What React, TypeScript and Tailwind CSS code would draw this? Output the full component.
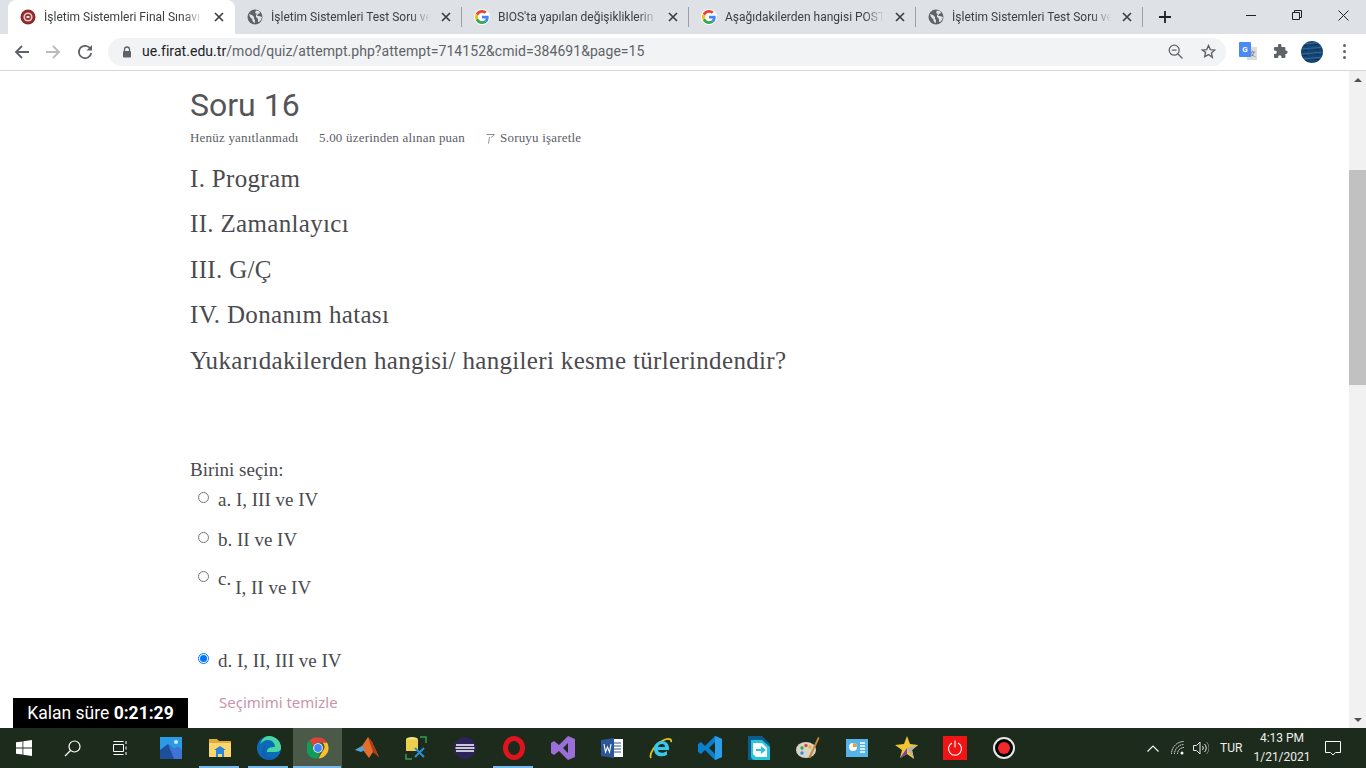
import { ReactNode } from "react";

const tabFont = "font-['Roboto',sans-serif]";
const serif = "font-['Liberation_Serif',serif]";

function Globe() {
  return (
    <svg width="16" height="16" viewBox="0 0 16 16" className="shrink-0">
      <circle cx="8" cy="8" r="7.5" fill="#5f6368" />
      <path d="M2 5l3 1 2 2 0 2 1 1 0 3-2-1-1-3-2-2zM9 1.500l3 .5 1 2-2 1-1 2 2 0 3 1-1 3-2 2-1 0 0-3-2-2 0-2 1-1-2-1z" fill="#dee1e6" />
    </svg>
  );
}

function GoogleG() {
  return (
    <div className="w-4 h-4 rounded-full bg-white shrink-0 flex items-center justify-center">
      <svg width="14" height="14" viewBox="0 0 48 48">
        <path fill="#EA4335" d="M24 9.500c3.500 0 6.700 1.200 9.200 3.600l6.900-6.900C35.900 2.400 30.500 0 24 0 14.600 0 6.500 5.400 2.600 13.200l8 6.200C12.500 13.700 17.800 9.500 24 9.500z" />
        <path fill="#4285F4" d="M47 24.500c0-1.600-.1-3.100-.4-4.500H24v9h13c-.6 3-2.300 5.500-4.800 7.200l7.700 6C44.400 38.100 47 31.900 47 24.500z" />
        <path fill="#FBBC05" d="M10.500 28.600c-.5-1.400-.8-3-.8-4.600s.3-3.200.8-4.600l-8-6.200C.9 16.400 0 20.100 0 24s.9 7.600 2.600 10.800z" />
        <path fill="#34A853" d="M24 48c6.500 0 11.900-2.100 15.900-5.800l-7.700-6c-2.100 1.400-4.900 2.300-8.200 2.300-6.200 0-11.500-4.200-13.400-9.900l-8 6.200C6.500 42.600 14.600 48 24 48z" />
      </svg>
    </div>
  );
}

function FiratIcon() {
  return (
    <svg width="16" height="16" viewBox="0 0 16 16" className="shrink-0">
      <circle cx="8" cy="8" r="7.500" fill="#8f2a2a" />
      <circle cx="8" cy="8" r="4.600" fill="#e7c9c6" />
      <circle cx="8" cy="8" r="3" fill="#9c2b2e" />
      <rect x="6.500" y="7" width="3" height="2" fill="#f3e3e0" />
    </svg>
  );
}

function CloseX() {
  return (
    <svg width="10" height="10" viewBox="0 0 10 10" className="shrink-0">
      <path d="M1 1l8 8M9 1l-8 8" stroke="#3c4043" strokeWidth="1.700" />
    </svg>
  );
}

function Tab({ icon, title, active, sep }: { icon: ReactNode; title: string; active?: boolean; sep?: boolean }) {
  return (
    <div className={`relative w-[227px] h-[34px] flex items-center pl-3 pr-[11px] gap-2 ${active ? "bg-white rounded-t-lg" : ""}`}>
      {icon}
      <span className={`flex-1 mr-[3px] overflow-hidden whitespace-nowrap text-[12px] text-[#3c4043] [mask-image:linear-gradient(to_right,black_88%,transparent_100%)] ${tabFont}`}>
        {title}
      </span>
      <CloseX />
      {sep && <div className="absolute right-0 top-[7px] w-px h-5 bg-[#9aa0a6]" />}
    </div>
  );
}

function TabStrip() {
  return (
    <div className="h-[34px] bg-[#dee1e6] flex items-end shrink-0 relative">
      <div className="flex pl-2">
        <Tab active icon={<FiratIcon />} title="İşletim Sistemleri Final Sınavı (sayfa 16)" />
        <Tab sep icon={<Globe />} title="İşletim Sistemleri Test Soru ve Cevapları" />
        <Tab sep icon={<GoogleG />} title="BIOS'ta yapılan değişikliklerin kaydedilmesi" />
        <Tab sep icon={<GoogleG />} title="Aşağıdakilerden hangisi POST esnasında" />
        <Tab sep icon={<Globe />} title="İşletim Sistemleri Test Soru ve Cevapları" />
      </div>
      <div className="ml-4 h-[34px] flex items-center">
        <svg width="12" height="12" viewBox="0 0 12 12">
          <path d="M6 0v12M0 6h12" stroke="#202124" strokeWidth="1.800" />
        </svg>
      </div>
      <div className="ml-auto flex h-[34px] items-start">
        <div className="w-[46px] h-[30px] flex items-center justify-center">
          <div className="w-[10px] h-px bg-[#202124]" />
        </div>
        <div className="w-[46px] h-[30px] flex items-center justify-center">
          <svg width="10" height="10" viewBox="0 0 10 10" fill="none" stroke="#202124">
            <path d="M.5 2.500h7v7h-7zM2.500 2.500v-2h7v7h-2" />
          </svg>
        </div>
        <div className="w-[46px] h-[30px] flex items-center justify-center">
          <svg width="11" height="11" viewBox="0 0 11 11" stroke="#202124">
            <path d="M.5.500l10 10M10.500.500l-10 10" />
          </svg>
        </div>
      </div>
    </div>
  );
}

function Toolbar() {
  return (
    <div className="h-[37px] bg-white border-b border-[#d6d7d9] flex items-center shrink-0 pb-[1px]">
      <div className="w-[44px] flex justify-center">
        <svg width="16" height="16" viewBox="0 0 16 16" fill="none" stroke="#5f6368" strokeWidth="1.800">
          <path d="M15 8H2M8 2L2 8l6 6" />
        </svg>
      </div>
      <div className="w-[18px] flex justify-center">
        <svg width="16" height="16" viewBox="0 0 16 16" fill="none" stroke="#b8babd" strokeWidth="1.800">
          <path d="M1 8h13M8 2l6 6-6 6" />
        </svg>
      </div>
      <div className="w-[46px] flex justify-center">
        <svg width="16" height="16" viewBox="0 0 16 16" fill="none" stroke="#5f6368" strokeWidth="1.800">
          <path d="M13.500 5A6.200 6.200 0 1 0 14.200 9" />
          <path d="M15 1v5.500H9.500z" fill="#5f6368" stroke="none" />
        </svg>
      </div>
      <div className="w-[1118px] h-7 rounded-full bg-[#f1f3f4] flex items-center pl-[14px] pr-[10px]">
        <svg width="10" height="12" viewBox="0 0 10 12" className="shrink-0">
          <path d="M2.500 5V3.500a2.500 2.500 0 0 1 5 0V5" fill="none" stroke="#5f6368" strokeWidth="1.300" />
          <rect x="1" y="5" width="8" height="6.500" rx="1" fill="#5f6368" />
        </svg>
        <span className="ml-[10px] text-[14px] text-[#5f6368] font-['Roboto',sans-serif] tracking-[0.05px]">
          <span className="text-[#202124]">ue.firat.edu.tr</span>/mod/quiz/attempt.php?attempt=714152&amp;cmid=384691&amp;page=15
        </span>
        <div className="ml-auto flex items-center gap-[18px]">
          <svg width="15" height="15" viewBox="0 0 15 15" fill="none" stroke="#5f6368" strokeWidth="1.300">
            <circle cx="6.200" cy="6.200" r="5" />
            <path d="M10 10l4.500 4.500M3.800 6.200h4.800" />
          </svg>
          <svg width="15" height="15" viewBox="0 0 24 24" fill="none" stroke="#5f6368" strokeWidth="2.200">
            <path d="M12 2.500l2.900 6.400 7 .8-5.200 4.700 1.400 6.900L12 16.900l-6.100 3.400 1.400-6.900L2.100 9.700l7-.8z" />
          </svg>
        </div>
      </div>
      <div className="ml-[13px] w-[18px] h-[19px] relative shrink-0">
        <div className="absolute left-[8px] top-[5px] w-[10px] h-[13px] bg-[#dcdcdc] text-[#666] text-[7px] leading-[13px] text-center">文</div>
        <div className="absolute left-0 top-0 w-[12px] h-[15px] bg-[#4a8af4] text-white text-[8px] font-bold flex items-center justify-center rounded-[1px] font-['Roboto',sans-serif]">G</div>
      </div>
      <div className="ml-4 shrink-0">
        <svg width="15" height="15" viewBox="0 0 15 15" fill="#5f6368">
          <path d="M5 1.500a1.700 1.700 0 0 1 3.400 0V3h3a1 1 0 0 1 1 1v2.500h.4a1.800 1.800 0 0 1 0 3.600h-.4V13a1 1 0 0 1-1 1H8.500v-1a1.700 1.700 0 0 0-3.400 0v1H2a1 1 0 0 1-1-1v-2.900h1a1.800 1.800 0 0 0 0-3.600H1V4a1 1 0 0 1 1-1h3z" />
        </svg>
      </div>
      <div className="ml-[13px] w-[22px] h-[22px] rounded-full shrink-0 bg-[repeating-linear-gradient(175deg,#16436f_0px,#16436f_2px,#2a6aa3_3px,#0d2b4d_5px)]" />
      <div className="ml-5 flex flex-col gap-[3px] shrink-0">
        <div className="w-[3px] h-[3px] rounded-full bg-[#5f6368]" />
        <div className="w-[3px] h-[3px] rounded-full bg-[#5f6368]" />
        <div className="w-[3px] h-[3px] rounded-full bg-[#5f6368]" />
      </div>
    </div>
  );
}

function Radio({ checked }: { checked?: boolean }) {
  return (
    <div className={`w-[11px] h-[11px] mt-[2px] rounded-full border bg-white shrink-0 flex items-center justify-center ${checked ? "border-[#0075ff]" : "border-[#767676]"}`}>
      {checked && <div className="w-[7px] h-[7px] rounded-full bg-[#0075ff]" />}
    </div>
  );
}

function Answer({ label, text, checked, className }: { label: string; text: string; checked?: boolean; className?: string }) {
  return (
    <div className={`flex items-start gap-[9px] ml-2 text-[19px] leading-[24px] text-[#4a4a4f] ${className ?? ""}`}>
      <Radio checked={checked} />
      <span className="-mt-[2px]">{label} {text}</span>
    </div>
  );
}

function Scrollbar() {
  return (
    <div className="w-[17px] bg-[#f1f1f1] flex flex-col items-center shrink-0">
      <div className="h-[17px] flex items-center justify-center">
        <div className="w-0 h-0 border-x-[4px] border-x-transparent border-b-[4px] border-b-[#505050]" />
      </div>
      <div className="h-[82px]" />
      <div className="w-full h-[215px] bg-[#c1c1c1]" />
      <div className="flex-1" />
      <div className="h-[17px] flex items-center justify-center">
        <div className="w-0 h-0 border-x-[4px] border-x-transparent border-t-[4px] border-t-[#505050]" />
      </div>
    </div>
  );
}

function QuizPage() {
  const lines = ["I. Program", "II. Zamanlayıcı", "III. G/Ç", "IV. Donanım hatası", "Yukarıdakilerden hangisi/ hangileri kesme türlerindendir?"];
  return (
    <div className="flex-1 min-h-0 flex relative bg-white">
      <div className={`flex-1 pl-[190px] pt-[14px] overflow-hidden ${serif}`}>
        <h2 className="font-['Roboto',sans-serif] text-[32px] leading-[40px] text-[#555559]">Soru 16</h2>
        <div className="flex items-center mt-1 text-[13px] leading-[18px] tracking-[0.2px] text-[#5c6068]">
          <span className="w-[129px]">Henüz yanıtlanmadı</span>
          <span className="w-[167px]">5.00 üzerinden alınan puan</span>
          <svg width="9" height="10" viewBox="0 0 9 10" className="mr-[5px] mt-[2px]" fill="none" stroke="#777">
            <path d="M.500.500h8L5 3.500M3.500 3l-1 6.500" strokeWidth="0.800" />
          </svg>
          <span>Soruyu işaretle</span>
        </div>
        <div className="mt-[15.500px] flex flex-col gap-[14px] text-[25px] leading-[31.500px] tracking-[0.33px] text-[#4a4a4f]">
          {lines.map((l) => (
            <p key={l}>{l}</p>
          ))}
        </div>
        <p className="mt-[81.500px] text-[19px] leading-[24px] text-[#4a4a4f]">Birini seçin:</p>
        <div className="mt-2 flex flex-col">
          <Answer label="a." text="I, III ve IV" />
          <Answer label="b." text="II ve IV" className="mt-[18px]" />
          <div className="flex items-start gap-[9px] ml-2 mt-[17px] text-[19px] leading-[24px] text-[#4a4a4f] h-[67px]">
            <Radio />
            <span className="-mt-[2px]">c.</span>
            <span className="-ml-[5px] mt-[7px]">I, II ve IV</span>
          </div>
          <Answer label="d." text="I, II, III ve IV" checked className="mt-[15px]" />
          <span className="ml-[29px] mt-[19px] text-[15px] leading-[20px] text-[#c994ac] font-['Noto_Sans',sans-serif]">Seçimimi temizle</span>
        </div>
      </div>
      <Scrollbar />
      <div className="absolute left-[13px] bottom-0 w-[175px] h-[30px] bg-black text-white flex items-center justify-center font-['Roboto',sans-serif] text-[17.500px]">
        Kalan süre&nbsp;<b>0:21:29</b>
      </div>
    </div>
  );
}

function AppIcon({ children, active, open }: { children: ReactNode; active?: boolean; open?: boolean }) {
  return (
    <div className={`relative w-[49px] h-10 flex items-center justify-center shrink-0 ${active ? "bg-[#4b5a48]" : ""}`}>
      {children}
      {active && <div className="absolute left-0 right-px bottom-0 h-[2px] bg-[#76b9ed]" />}
      {open && <div className="absolute left-1 right-[5px] bottom-0 h-[2px] bg-[#76b9ed]" />}
    </div>
  );
}

function Taskbar() {
  return (
    <div className="h-10 bg-[#1d2b1c] flex items-center shrink-0 text-white">
      <div className="w-12 flex justify-center">
        <svg width="16" height="16" viewBox="0 0 16 16" fill="#fff">
          <path d="M0 2.300l6.500-.9v6.200H0zM7.300 1.300L16 0v7.600H7.300zM0 8.400h6.500v6.200L0 13.700zM7.300 8.400H16V16l-8.700-1.200z" />
        </svg>
      </div>
      <div className="w-12 flex justify-center">
        <svg width="17" height="17" viewBox="0 0 17 17" fill="none" stroke="#fff" strokeWidth="1.200">
          <circle cx="10.500" cy="6.500" r="5.500" />
          <path d="M6.500 10.500L1 16" />
        </svg>
      </div>
      <div className="w-[50px] flex justify-center">
        <svg width="16" height="16" viewBox="0 0 16 16" fill="none" stroke="#fff">
          <path d="M.5 4.500h10v7H.5zM.5 1.500h10M.5 14.500h10M13 1v3M13 6.500v3M13 12v3" />
        </svg>
      </div>

      <AppIcon>
        <svg width="22" height="22" viewBox="0 0 22 22">
          <rect width="22" height="22" fill="#2b9be8" />
          <path d="M0 22V13l8-6 6 5 4-2 4 4v8z" fill="#1c4f9c" />
          <path d="M8 7l6 5 4-2 4 4v8h-8z" fill="#3f74d6" />
          <circle cx="16" cy="5" r="2" fill="#cfeafc" />
        </svg>
      </AppIcon>
      <AppIcon open>
        <svg width="22" height="20" viewBox="0 0 22 20">
          <path d="M0 1h8l2 2h12v16H0z" fill="#e2ab36" />
          <path d="M0 5h22v14H0z" fill="#fbd66f" />
          <path d="M7 12h8v7h-2v-3H9v3H7z" fill="#2b86d9" />
          <path d="M5 12l6-4 6 4z" fill="#2b86d9" />
        </svg>
      </AppIcon>
      <AppIcon open>
        <svg width="24" height="24" viewBox="0 0 24 24">
          <circle cx="12" cy="12" r="12" fill="#0c6bb8" />
          <path d="M12 0a12 12 0 0 1 12 12c0 3-3 4-6 4H10c0-4 3-5 8-5 0-4-3-7-7-7-3 0-6 2-8 4 2-5 5-8 9-8z" fill="#47d6a2" />
          <path d="M8 14c0 5 4 8 9 8l2-1c-2 2-5 3-7 3-4 0-7-4-7-8 0-4 3-7 5-8-1 2-2 4-2 6z" fill="#125fae" />
        </svg>
      </AppIcon>
      <AppIcon active>
        <svg width="22" height="22" viewBox="0 0 48 48">
          <path d="M24 1a23 23 0 0 1 20 11.500H24a11.500 11.500 0 0 0-11 8L5 7.500A23 23 0 0 1 24 1z" fill="#db4437" />
          <path d="M44 12.500A23 23 0 0 1 25 47l10-17.500a11.500 11.500 0 0 0-1-17z" fill="#fbc02d" />
          <path d="M5 7.500l10 17.500a11.500 11.500 0 0 0 14 10.500L23 47A23 23 0 0 1 5 7.500z" fill="#0f9d58" />
          <circle cx="24" cy="24" r="10.500" fill="#fff" />
          <circle cx="24" cy="24" r="8.500" fill="#4285f4" />
        </svg>
      </AppIcon>
      <AppIcon>
        <svg width="24" height="22" viewBox="0 0 24 22">
          <path d="M0 13l7-4 6-9 4 5 7 15-6-5-4 6-6-8z" fill="#e0702a" />
          <path d="M0 13l7-4 3 4-4 2z" fill="#4fa3d8" />
          <path d="M13 0l4 5 7 15-6-5z" fill="#b23a1c" />
        </svg>
      </AppIcon>
      <AppIcon>
        <svg width="22" height="24" viewBox="0 0 22 24">
          <ellipse cx="7" cy="3.500" rx="6" ry="2.500" fill="#f6e27a" />
          <path d="M1 3.500h12V15H1z" fill="#eccf4e" />
          <path d="M15 1h6v6M1 18v5h6" fill="none" stroke="#3a9a4a" strokeWidth="1.500" />
          <path d="M10 12l9 9M19 12l-9 9" stroke="#2b8fd8" strokeWidth="2" />
        </svg>
      </AppIcon>
      <AppIcon>
        <svg width="22" height="22" viewBox="0 0 22 22">
          <circle cx="11" cy="11" r="11" fill="#2c2255" />
          <path d="M0 11a11 11 0 0 1 3-8A12 12 0 0 0 3 19a11 11 0 0 1-3-8z" fill="#f7941e" />
          <path d="M2 8h18M1.500 11h19M2 14h18" stroke="#fff" strokeWidth="1.300" />
        </svg>
      </AppIcon>
      <AppIcon open>
        <div className="w-[22px] h-6 rounded-[50%] border-[5px] border-[#e0141f]" />
      </AppIcon>
      <AppIcon>
        <svg width="24" height="24" viewBox="0 0 24 24">
          <path d="M17 0l7 3v18l-7 3-9-9-5 4-3-2V7l3-2 5 4zM17 7l-5 5 5 5z" fill="#9a6fd8" fillRule="evenodd" />
        </svg>
      </AppIcon>
      <AppIcon>
        <svg width="22" height="20" viewBox="0 0 22 20">
          <rect x="8" y="1" width="14" height="18" fill="#fff" />
          <path d="M13 5h7M13 8h7M13 11h7M13 14h7" stroke="#2b579a" />
          <path d="M0 2l13-2v20L0 18z" fill="#2b579a" />
          <path d="M3 6l1.500 8 2-5 2 5L10 6" stroke="#fff" fill="none" strokeWidth="1.100" />
        </svg>
      </AppIcon>
      <AppIcon>
        <svg width="24" height="24" viewBox="0 0 24 24" fill="none">
          <path d="M2 22c-2-3 3-14 13-18 5-2 8-1 7 2" stroke="#e8c21e" strokeWidth="1.800" />
          <path d="M5 13c0-5 4-8 8-8s7 3 7 7v2H9c0 3 5 4 9 1v4c-6 3-13 1-13-6zm4-2h7c0-2-1-3-3-3s-4 1-4 3z" fill="#37c8ee" />
        </svg>
      </AppIcon>
      <AppIcon>
        <svg width="24" height="24" viewBox="0 0 24 24">
          <path d="M17 0l7 3v18l-7 3L7 14l-4 4-3-2V8l3-2 4 4z" fill="#0a7fd0" />
          <path d="M17 6l-6 6 6 6z" fill="#1d2b1c" />
          <path d="M17 0l7 3v18l-7 3z" fill="#2a9fe8" />
        </svg>
      </AppIcon>
      <AppIcon>
        <svg width="22" height="24" viewBox="0 0 22 24">
          <path d="M0 0h14l8 8v16H0z" fill="#0a5c8a" />
          <path d="M3 4h11l8 7v13H7a4 4 0 0 1-4-4z" fill="#2bc4e0" />
          <path d="M5 7h9l5 5v9H8l-3-3z" fill="#fff" />
          <path d="M8 13h5v-3l5 4-5 4v-3H8z" fill="#2bc4e0" />
        </svg>
      </AppIcon>
      <AppIcon>
        <svg width="24" height="24" viewBox="0 0 24 24">
          <ellipse cx="10" cy="14" rx="10" ry="8" fill="#d9d4c8" />
          <circle cx="6" cy="12" r="1.700" fill="#3aa655" />
          <circle cx="10" cy="9.500" r="1.700" fill="#e0483a" />
          <circle cx="14" cy="11" r="1.700" fill="#e8b61e" />
          <circle cx="6" cy="17" r="1.700" fill="#3b86d8" />
          <path d="M22 1l1.500 1-9 20-2-1z" fill="#c88a3a" />
        </svg>
      </AppIcon>
      <AppIcon>
        <svg width="22" height="18" viewBox="0 0 22 18">
          <rect width="22" height="18" fill="#55b4ec" />
          <circle cx="7" cy="8" r="4" fill="#fff" />
          <path d="M7 8V4a4 4 0 0 1 4 4z" fill="#f0a030" />
          <path d="M14 4h5M14 7h5M14 10h5M14 13h5" stroke="#fff" strokeWidth="1.500" />
        </svg>
      </AppIcon>
      <AppIcon>
        <svg width="24" height="24" viewBox="0 0 24 24">
          <path d="M13 0l3 8 8 1-6 5 2 9-7-5-7 4 2-8-7-5 9-1z" fill="#f4c430" />
          <path d="M13 12l11-3-6 5 2 9z" fill="#b0b0b8" />
          <path d="M13 12l-7 10 7-4z" fill="#7b3fb5" />
        </svg>
      </AppIcon>
      <AppIcon>
        <div className="w-6 h-6 bg-[#f01414] flex items-center justify-center">
          <svg width="16" height="16" viewBox="0 0 16 16" fill="none" stroke="#fff" strokeWidth="1.100">
            <path d="M5 3a6.500 6.500 0 1 0 6 0M8 .5v7" />
          </svg>
        </div>
      </AppIcon>
      <AppIcon>
        <div className="w-[22px] h-[22px] rounded-full border-2 border-[#e8e8e8] bg-black flex items-center justify-center">
          <div className="w-3 h-3 rounded-full bg-[#ee2a2a]" />
        </div>
      </AppIcon>

      <div className="ml-auto flex items-center h-full mr-[14px]">
        <svg width="12" height="7" viewBox="0 0 12 7" fill="none" stroke="#fff" strokeWidth="1.100">
          <path d="M.5 6.500L6 1l5.500 5.500" />
        </svg>
        <svg width="14" height="14" viewBox="0 0 14 14" fill="none" stroke="#e8e8e8" className="ml-3">
          <path d="M.5 13A12.500 12.500 0 0 1 13 .5M3.500 13A9.500 9.500 0 0 1 13 3.500M6.500 13A6.500 6.500 0 0 1 13 6.500" strokeDasharray="1.500 .6" />
          <circle cx="11" cy="12" r="1.500" fill="#fff" stroke="none" />
        </svg>
        <svg width="16" height="14" viewBox="0 0 16 14" fill="none" stroke="#e8e8e8" className="ml-2">
          <path d="M.5 4.500h3L7 1v12L3.500 9.500h-3zM9.500 5a3 3 0 0 1 0 4M11.500 3a5.500 5.500 0 0 1 0 8" />
          <path d="M13.500 1a8.500 8.500 0 0 1 0 12" stroke="#777" />
        </svg>
        <span className={`ml-[11px] w-6 text-[12px] text-[#eee] ${tabFont}`}>TUR</span>
        <div className={`ml-[6px] w-16 text-center text-[12px] leading-[19px] text-[#eee] ${tabFont}`}>
          <div>4:13 PM</div>
          <div>1/21/2021</div>
        </div>
        <div className="w-[38px] flex justify-center">
          <svg width="16" height="15" viewBox="0 0 16 15" fill="none" stroke="#fff">
            <path d="M.5.500h15v11h-5l-2.500 2.500-2.500-2.500h-5z" />
          </svg>
        </div>
      </div>
    </div>
  );
}

export default function App() {
  return (
    <div className="w-[1366px] h-[768px] flex flex-col overflow-hidden bg-white">
      <TabStrip />
      <Toolbar />
      <QuizPage />
      <Taskbar />
    </div>
  );
}
